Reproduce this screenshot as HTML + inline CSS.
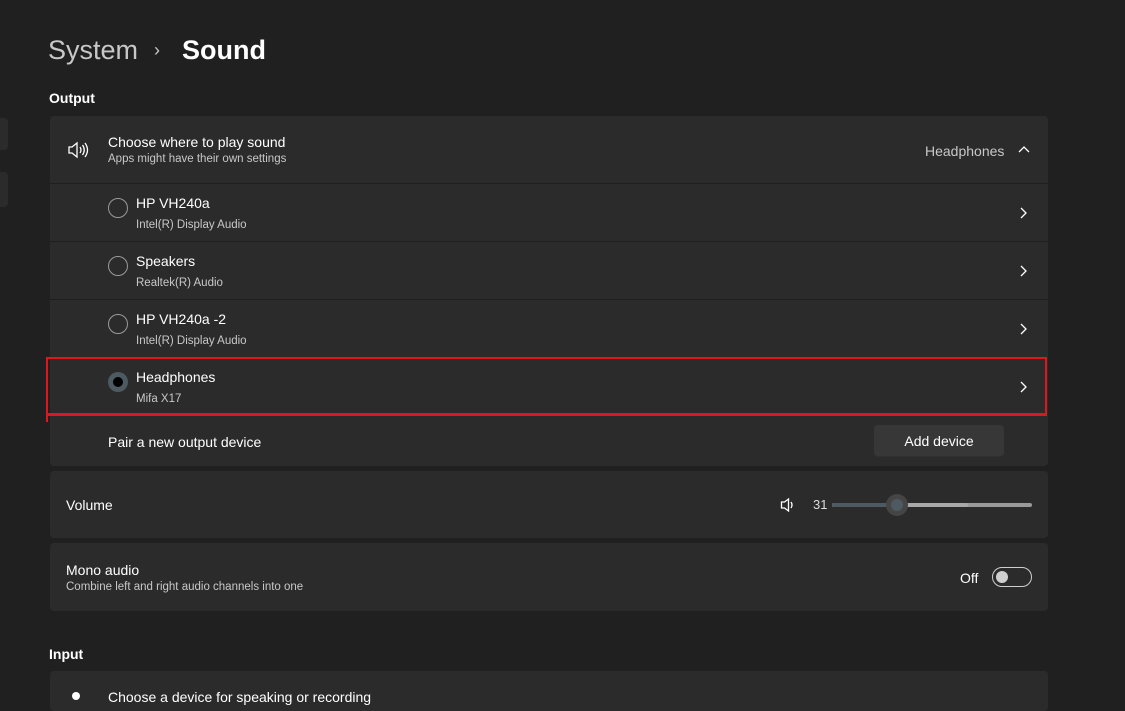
<!DOCTYPE html>
<html><head><meta charset="utf-8"><style>
*{margin:0;padding:0;box-sizing:border-box}
body{width:1125px;height:697px;background:#202020;font-family:"Liberation Sans",sans-serif;color:#fff;position:relative;overflow:hidden}
.a{position:absolute}
.card{position:absolute;left:50px;width:998px;background:#2b2b2b;border-radius:4px}
.t{font-size:14px;color:#fff;position:absolute}
.s{font-size:11.5px;color:#c8c8c8;position:absolute}
.sep{position:absolute;left:50px;width:998px;height:1px;background:#1f1f1f}
.radio{position:absolute;left:108px;width:20px;height:20px;border:1px solid #9a9a9a;border-radius:50%}
.chev{position:absolute;left:1018px}
</style></head><body>
<div class="a" style="left:0;top:118px;width:8px;height:32px;background:#2b2b2b;border-radius:0 4px 4px 0"></div>
<div class="a" style="left:0;top:172px;width:8px;height:35px;background:#2b2b2b;border-radius:0 4px 4px 0"></div>
<div class="a" style="left:48px;top:35px;font-size:27px;color:#c8c8c8">System</div>
<div class="a" style="left:154px;top:40px;font-size:18px;color:#c8c8c8">›</div>
<div class="a" style="left:182px;top:35px;font-size:27px;font-weight:bold">Sound</div>
<div class="a" style="left:49px;top:90px;font-size:14px;font-weight:bold">Output</div>

<div class="card" style="top:116px;height:350px"></div>
<svg class="a" style="left:67px;top:141px" width="22" height="18" viewBox="0 0 22 18" fill="none" stroke="#fff" stroke-width="1.3"><path d="M2 6h3l5-4v14l-5-4H2z"/><path d="M13 6q2 3 0 6M15.5 4q3.5 5 0 10M18 2q5 7 0 14"/></svg>
<div class="t" style="left:108px;top:134px">Choose where to play sound</div>
<div class="s" style="left:108px;top:153px">Apps might have their own settings</div>
<div class="a" style="left:925px;top:143px;font-size:14px;color:#c8c8c8">Headphones</div>
<svg class="a" style="left:1017px;top:144px" width="14" height="10"><path d="M2 8l5-5 5 5" fill="none" stroke="#fff" stroke-width="1.3"/></svg>

<div class="sep" style="top:183px"></div>
<div class="radio" style="top:198px"></div>
<div class="t" style="left:136px;top:195px">HP VH240a</div>
<div class="s" style="left:136px;top:219px">Intel(R) Display Audio</div>
<svg class="chev" style="top:206px" width="10" height="14"><path d="M3 2l5 5-5 5" fill="none" stroke="#fff" stroke-width="1.3"/></svg>

<div class="sep" style="top:241px"></div>
<div class="radio" style="top:256px"></div>
<div class="t" style="left:136px;top:253px">Speakers</div>
<div class="s" style="left:136px;top:277px">Realtek(R) Audio</div>
<svg class="chev" style="top:264px" width="10" height="14"><path d="M3 2l5 5-5 5" fill="none" stroke="#fff" stroke-width="1.3"/></svg>

<div class="sep" style="top:299px"></div>
<div class="radio" style="top:314px"></div>
<div class="t" style="left:136px;top:311px">HP VH240a -2</div>
<div class="s" style="left:136px;top:335px">Intel(R) Display Audio</div>
<svg class="chev" style="top:322px" width="10" height="14"><path d="M3 2l5 5-5 5" fill="none" stroke="#fff" stroke-width="1.3"/></svg>

<div class="a" style="left:108px;top:372px;width:20px;height:20px;border-radius:50%;background:#4e5a62"></div>
<div class="a" style="left:113px;top:377px;width:10px;height:10px;border-radius:50%;background:#000"></div>
<div class="t" style="left:136px;top:369px">Headphones</div>
<div class="s" style="left:136px;top:393px">Mifa X17</div>
<svg class="chev" style="top:380px" width="10" height="14"><path d="M3 2l5 5-5 5" fill="none" stroke="#fff" stroke-width="1.3"/></svg>
<div class="a" style="left:46px;top:357px;width:1001px;height:59px;border:2px solid #e0161e;border-bottom-width:3px"></div>
<div class="a" style="left:46px;top:410px;width:2px;height:12px;background:#e0161e"></div>

<div class="t" style="left:108px;top:434px">Pair a new output device</div>
<div class="a" style="left:874px;top:425px;width:130px;height:32px;background:#373737;border-radius:4px;border-bottom:1px solid #303030;font-size:14px;text-align:center;line-height:32px">Add device</div>

<div class="card" style="top:471px;height:67px"></div>
<div class="t" style="left:66px;top:497px">Volume</div>
<svg class="a" style="left:780px;top:497px" width="16" height="16" viewBox="0 0 16 16" fill="none" stroke="#fff" stroke-width="1.3"><path d="M1.5 5h3l4-3v12l-4-3h-3z"/><path d="M11 5q2 3 0 6"/></svg>
<div class="a" style="left:813px;top:497px;font-size:13px;color:#ddd">31</div>
<div class="a" style="left:832px;top:503px;width:200px;height:4px;border-radius:2px;background:#9a9a9a"></div>
<div class="a" style="left:832px;top:503px;width:136px;height:4px;border-radius:2px;background:#a8a8a8"></div>
<div class="a" style="left:832px;top:503px;width:65px;height:4px;border-radius:2px;background:#4e5a62"></div>
<div class="a" style="left:886px;top:494px;width:22px;height:22px;border-radius:50%;background:#454545"></div>
<div class="a" style="left:891px;top:499px;width:12px;height:12px;border-radius:50%;background:#4e5a62"></div>

<div class="card" style="top:543px;height:68px"></div>
<div class="t" style="left:66px;top:562px">Mono audio</div>
<div class="s" style="left:66px;top:581px">Combine left and right audio channels into one</div>
<div class="a" style="left:960px;top:570px;font-size:14px">Off</div>
<div class="a" style="left:992px;top:567px;width:40px;height:20px;border:1px solid #cfcfcf;border-radius:10px"></div>
<div class="a" style="left:996px;top:571px;width:12px;height:12px;border-radius:50%;background:#cfcfcf"></div>

<div class="a" style="left:49px;top:646px;font-size:14px;font-weight:bold">Input</div>
<div class="card" style="top:671px;height:40px"></div>
<div class="t" style="left:108px;top:689px">Choose a device for speaking or recording</div>
<div class="a" style="left:72px;top:692px;width:8px;height:8px;border-radius:50%;background:#fff"></div>
</body></html>
